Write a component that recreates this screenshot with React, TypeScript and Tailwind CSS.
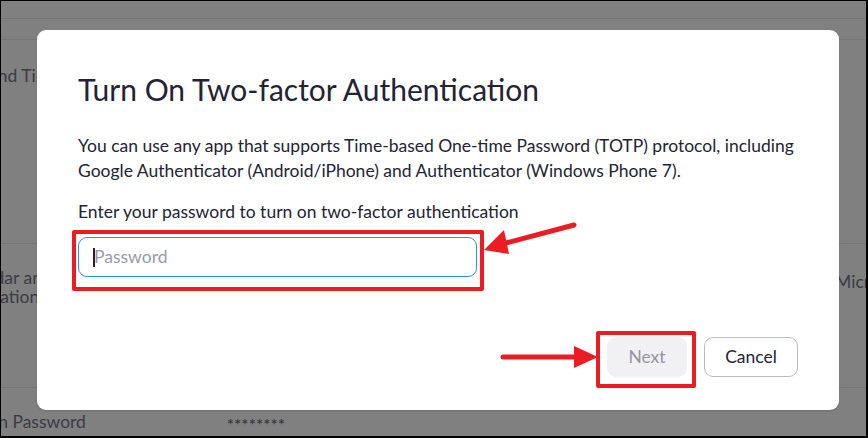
import React from "react";

export default function App() {
  return (
    <div
      className="relative w-[868px] h-[438px] overflow-hidden bg-[#808080] border-t border-l border-r-2 border-b-2 border-black"
      style={{ fontFamily: "Lato, 'Noto Sans', sans-serif" }}
    >
      {/* background page (dimmed) */}
      <div className="flex flex-col text-[#3b3b47] text-[17.5px]">
        <div className="h-[18px] border-b border-[#747474]" />
        <div className="h-[21px] border-b border-[#747474]" />
        <div className="h-[204px] border-b border-[#747474] pt-[23px]">
          <span className="ml-[-12px] whitespace-nowrap">and Time</span>
        </div>
        <div className="h-[144px] border-b border-[#747474] flex justify-between pt-[24px] leading-[19px]">
          <div className="ml-[-50px] whitespace-nowrap">
            <div>Calendar and</div>
            <div className="ml-[4px]">Integration</div>
          </div>
          <div className="mr-[-43px] mt-[4px] whitespace-nowrap">Microsoft</div>
        </div>
        <div className="flex items-start pt-[24px] leading-[20px]">
          <span className="ml-[-46px] w-[272px] whitespace-nowrap">Sign-in Password</span>
          <span className="text-[16px] font-bold tracking-[0.5px] mt-[2px]">********</span>
        </div>
      </div>

      {/* modal */}
      <div className="absolute left-[36px] top-[29px] w-[802px] h-[380px] bg-white rounded-[9px] shadow-[0_1px_2px_rgba(0,0,0,0.15)] pl-[41px] pr-[30px] flex flex-col text-[#232333]">
        <h1 className="text-[30px] leading-[36px] mt-[41px] font-normal whitespace-nowrap">Turn On Two-factor Authentication</h1>
        <p className="text-[17.5px] leading-[25px] mt-[26px] whitespace-nowrap">
          You can use any app that supports Time-based One-time Password (TOTP) protocol, including
          <br />
          Google Authenticator (Android/iPhone) and Authenticator (Windows Phone 7).
        </p>
        <p className="text-[17.5px] leading-[25px] mt-[16px]">Enter your password to turn on two-factor authentication</p>
        <div className="mt-[13px] w-[399px] h-[40px] rounded-[9px] border border-[#2d8cff] flex items-center pl-[14px]">
          <span className="w-[2px] h-[19px] bg-[#232333]" />
          <span className="text-[17.5px] text-[#9b9ba6] ml-[-1px]">Password</span>
        </div>
        <div className="flex justify-end gap-[17px] mt-[60px] pr-[11px]">
          <button className="w-[80px] h-[40px] rounded-[9px] bg-[#f1f1f4] text-[17.5px] text-[#9595a0]">Next</button>
          <button className="w-[94px] h-[40px] rounded-[9px] border border-[#babac4] text-[17.5px] text-[#232333]">Cancel</button>
        </div>
      </div>

      {/* annotations */}
      <div className="absolute left-[71px] top-[229px] w-[412px] h-[61px] border-[4px] border-[#ec1c24] rounded-[2px]" />
      <div className="absolute left-[595px] top-[330px] w-[100px] h-[57px] border-[4px] border-[#ec1c24] rounded-[2px]" />
      <svg className="absolute left-0 top-0" width="868" height="438" viewBox="0 0 868 438">
        <line x1="573" y1="224" x2="505" y2="242" stroke="#ec1c24" strokeWidth="5" strokeLinecap="round" />
        <polygon points="483,249 503,229 508,253" fill="#ec1c24" />
        <line x1="502" y1="356" x2="580" y2="356" stroke="#ec1c24" strokeWidth="5" strokeLinecap="round" />
        <polygon points="597,356 573,345 573,367" fill="#ec1c24" />
      </svg>
    </div>
  );
}
